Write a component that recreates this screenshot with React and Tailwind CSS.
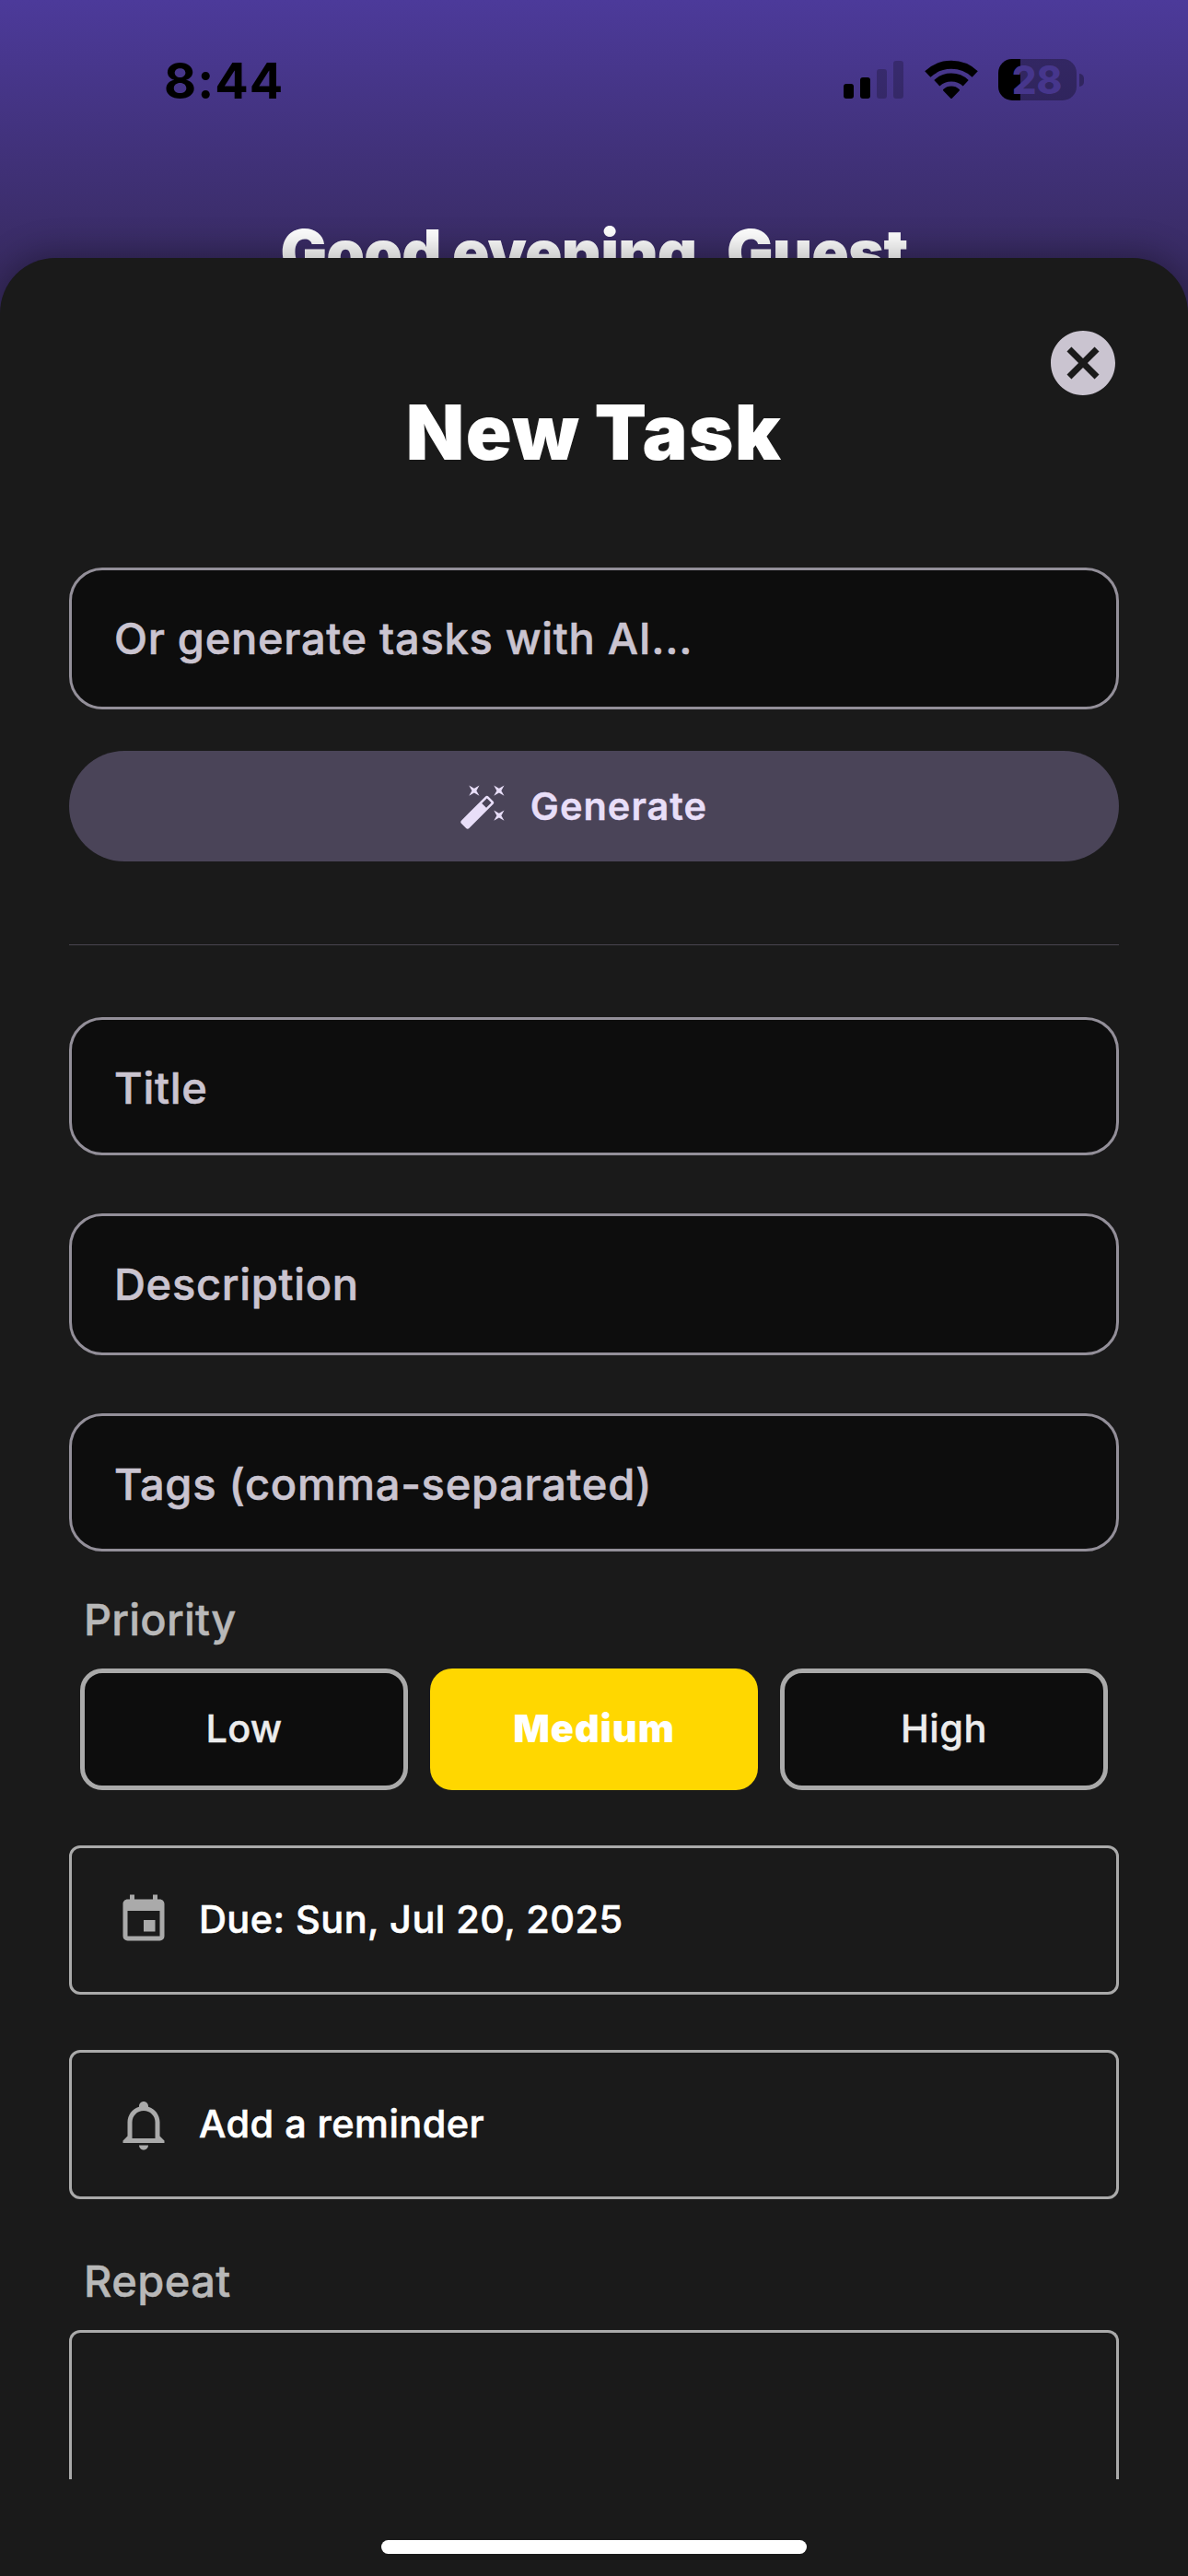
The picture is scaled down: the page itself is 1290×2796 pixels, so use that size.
import React from "react";

function SignalIcon() {
  return (
    <svg width="65" height="46" viewBox="0 0 65 46" className="mr-px" aria-hidden="true">
      <rect x="0" y="27" width="11" height="16" rx="3" />
      <rect x="18" y="20" width="11" height="23" rx="3" />
      <rect x="36" y="11" width="11" height="32" rx="3" opacity="0.22" />
      <rect x="54" y="2" width="11" height="41" rx="3" opacity="0.22" />
    </svg>
  );
}

function WifiIcon() {
  return (
    <svg width="58" height="46" viewBox="0 0 58 46" fill="none" stroke="#000" aria-hidden="true">
      <path d="M3.3 16.6A37.4 37.4 0 0 1 54.7 16.6" strokeWidth="9" />
      <path d="M13.3 26.2A23 23 0 0 1 44.7 26.2" strokeWidth="8.8" />
      <path d="M29 42L21 33.7A11.8 11.8 0 0 1 37 33.7Z" fill="#000" strokeWidth="2" strokeLinejoin="round" />
    </svg>
  );
}

function Battery({ level }) {
  return (
    <div className="flex h-[46px] items-center gap-[3px]">
      <div className="mb-px flex h-[45px] w-[85px] items-center justify-center rounded-[15px] bg-[linear-gradient(to_right,#000_24px,rgba(0,0,0,0.3)_24px)]">
        <span className="-ml-px text-[42px] leading-none font-extrabold text-[#46368c]">{level}</span>
      </div>
      <div className="h-[14px] w-[5px] rounded-r-full bg-black/30" />
    </div>
  );
}

function MdiIcon({ d, className }) {
  return (
    <svg viewBox="0 0 24 24" fill="currentColor" className={className} aria-hidden="true">
      <path d={d} />
    </svg>
  );
}

const icons = {
  close:
    "M12,2C17.53,2 22,6.47 22,12C22,17.53 17.53,22 12,22C6.47,22 2,17.53 2,12C2,6.47 6.47,2 12,2M15.59,7L12,10.59L8.41,7L7,8.41L10.59,12L7,15.59L8.41,17L12,13.41L15.59,17L17,15.59L13.41,12L17,8.41L15.59,7Z",
  wand:
    "M7.5,5.6L5,7L6.4,4.5L5,2L7.5,3.4L10,2L8.6,4.5L10,7L7.5,5.6M19.5,15.4L22,14L20.6,16.5L22,19L19.5,17.6L17,19L18.4,16.5L17,14L19.5,15.4M22,2L20.6,4.5L22,7L19.5,5.6L17,7L18.4,4.5L17,2L19.5,3.4L22,2M13.34,12.78L15.78,10.34L13.66,8.22L11.22,10.66L13.34,12.78M14.37,7.29L16.71,9.63C17.1,10 17.1,10.65 16.71,11.04L5.04,22.71C4.65,23.1 4,23.1 3.63,22.71L1.29,20.37C0.9,20 0.9,19.35 1.29,18.96L12.96,7.29C13.35,6.9 14,6.9 14.37,7.29Z",
  calendar:
    "M19,19H5V8H19M16,1V3H8V1H6V3H5C3.89,3 3,3.89 3,5V19A2,2 0 0,0 5,21H19A2,2 0 0,0 21,19V5C21,3.89 20.1,3 19,3H18V1M17,12H12V17H17V12Z",
  bell:
    "M10 21H14C14 22.1 13.1 23 12 23S10 22.1 10 21M21 19V20H3V19L5 17V11C5 7.9 7 5.2 10 4.3V4C10 2.9 10.9 2 12 2S14 2.9 14 4V4.3C17 5.2 19 7.9 19 11V17L21 19M17 11C17 8.2 14.8 6 12 6S7 8.2 7 11V18H17V11Z",
};

function Field({ className, children }) {
  return (
    <div
      className={`flex shrink-0 items-center rounded-[36px] border-3 border-[#938f99] bg-[#0d0d0d] pl-[46px] text-[47px] leading-none font-medium tracking-[0.7px] text-[#cac4d0] [-webkit-text-stroke:0.6px] ${className}`}
    >
      {children}
    </div>
  );
}

function Label({ className, children }) {
  return (
    <div
      className={`h-[60px] pl-4 text-[47px] leading-[60px] font-medium text-[#b8b8b8] [-webkit-text-stroke:0.5px] ${className}`}
    >
      {children}
    </div>
  );
}

function Row({ icon, children }) {
  return (
    <div className="mt-[60px] flex h-[162px] shrink-0 items-center rounded-xl border-3 border-[#aaaaaa] pl-[48px]">
      <MdiIcon d={icon} className="size-[60px] text-[#aaaaaa]" />
      <span className="mb-[3px] ml-[30px] text-[41.5px] leading-[60px] font-medium tracking-[0.42px] text-white [-webkit-text-stroke:0.6px]">
        {children}
      </span>
    </div>
  );
}

export default function App() {
  return (
    <div className="flex h-[2796px] w-[1290px] flex-col overflow-hidden bg-[linear-gradient(to_bottom,#4c3a9a_0px,#372a5e_310px)] font-['Inter',sans-serif]">
      <header className="h-[280px] shrink-0">
        <div className="flex h-[174px] items-center justify-between pr-[113px] pl-[178px]">
          <span className="mt-0.5 text-[54px] leading-none font-bold tracking-[1px] text-black">8:44</span>
          <div className="flex gap-[22px]">
            <SignalIcon />
            <WifiIcon />
            <Battery level="28" />
          </div>
        </div>
        <h2 className="mt-[60px] h-20 text-center text-[67px] leading-20 font-black tracking-[-0.9px] whitespace-nowrap text-white">
          Good evening, Guest
        </h2>
      </header>

      <main className="relative flex grow flex-col rounded-t-[60px] bg-[#1a1a1a] px-[75px] pt-[72px] shadow-[0_-6px_36px_rgba(0,0,0,0.3)]">
        <button type="button" aria-label="Close" className="-mr-[3px] h-[77px] self-end">
          <MdiIcon d={icons.close} className="size-[84px] text-[#cac4d0]" />
        </button>
        <h1 className="h-20 text-center text-[82.5px] leading-20 font-black tracking-[1.3px] [word-spacing:-2px] text-white">
          New Task
        </h1>

        <Field className="mt-[107px] h-[154px] pb-0.5">Or generate tasks with AI...</Field>
        <button
          type="button"
          className="mt-[45px] flex h-[120px] shrink-0 items-center justify-center gap-6 rounded-full bg-[#4a4458] text-[#e8def8]"
        >
          <MdiIcon d={icons.wand} className="size-[54px]" />
          <span className="mt-px mr-6 text-[41.5px] leading-none font-semibold tracking-[1px] [-webkit-text-stroke:0.4px]">
            Generate
          </span>
        </button>
        <div className="mt-[90px] h-px shrink-0 bg-[#49454f]" />

        <Field className="mt-[78px] h-[150px] pt-[3px]">Title</Field>
        <Field className="mt-[63px] h-[154px] pb-0.5">Description</Field>
        <Field className="mt-[63px] h-[150px] pt-[3px]">Tags (comma-separated)</Field>

        <Label className="mt-11 tracking-[0.2px]">Priority</Label>
        <div className="mx-3 mt-[23px] grid h-[132px] shrink-0 grid-cols-3 gap-6 text-[41.5px] leading-none font-medium text-[#ececec]">
          <button
            type="button"
            className="rounded-3xl border-[5px] border-[#aaaaaa] bg-[#0d0d0d] pb-px tracking-[0.2px] [-webkit-text-stroke:0.4px]"
          >
            Low
          </button>
          <button type="button" className="rounded-3xl bg-[#ffd700] pb-px font-black tracking-[0.9px] text-white">
            Medium
          </button>
          <button
            type="button"
            className="rounded-3xl border-[5px] border-[#aaaaaa] bg-[#0d0d0d] pb-px tracking-[0.5px] [-webkit-text-stroke:0.4px]"
          >
            High
          </button>
        </div>

        <Row icon={icons.calendar}>Due: Sun, Jul 20, 2025</Row>
        <Row icon={icons.bell}>Add a reminder</Row>

        <Label className="mt-[59px] tracking-[0.4px]">Repeat</Label>
        <div className="mt-[23px] h-[162px] shrink-0 rounded-t-xl border-3 border-b-0 border-[#aaaaaa]" />

        <div className="mt-[66px] h-[15px] w-[462px] shrink-0 self-center rounded-full bg-white" />
      </main>
    </div>
  );
}
